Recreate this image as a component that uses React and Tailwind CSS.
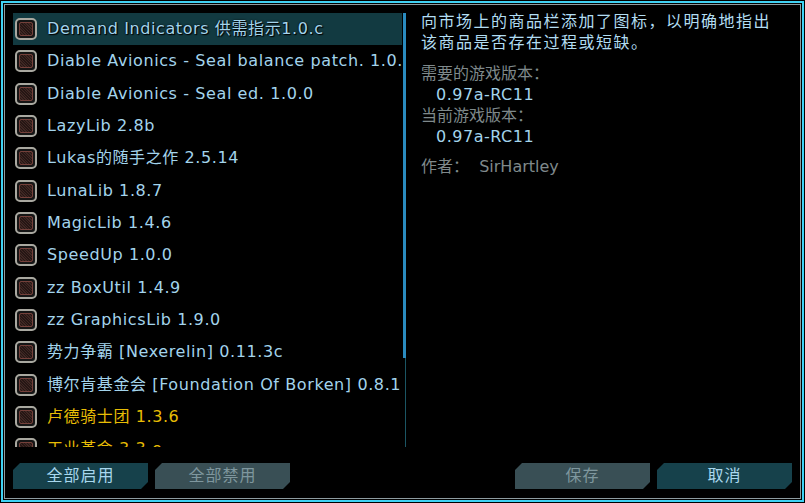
import React from 'react';

const MODS = [
  { name: 'Demand Indicators 供需指示1.0.c', selected: true },
  { name: 'Diable Avionics - Seal balance patch. 1.0.0' },
  { name: 'Diable Avionics - Seal ed. 1.0.0' },
  { name: 'LazyLib 2.8b' },
  { name: 'Lukas的随手之作 2.5.14' },
  { name: 'LunaLib 1.8.7' },
  { name: 'MagicLib 1.4.6' },
  { name: 'SpeedUp 1.0.0' },
  { name: 'zz BoxUtil 1.4.9' },
  { name: 'zz GraphicsLib 1.9.0' },
  { name: '势力争霸 [Nexerelin] 0.11.3c' },
  { name: '博尔肯基金会 [Foundation Of Borken] 0.8.1' },
  { name: '卢德骑士团 1.3.6', yellow: true },
  { name: '工业革命 3.3.e', yellow: true },
];

const FONT = "font-['DejaVu_Sans','Noto_Sans_CJK_SC',sans-serif]";
const NOTCH =
  '[clip-path:polygon(7px_0,100%_0,100%_calc(100%_-_7px),calc(100%_-_7px)_100%,0_100%,0_7px)]';

function Checkbox() {
  return (
    <div className="w-[22px] h-[22px] shrink-0 rounded-[5px] border-2 border-[#a9a8a0] bg-[#151515] p-[2px]">
      <div className="w-full h-full rounded-[2px] border border-[#74403a] bg-[repeating-linear-gradient(45deg,#3f2723_0_1px,#251614_1px_2px)]" />
    </div>
  );
}

function ModRow({ mod }) {
  return (
    <div
      className={`flex items-center gap-[10px] pl-[2px] h-[32.33px] shrink-0 ${
        mod.selected ? 'bg-[#123a41]' : ''
      }`}
    >
      <Checkbox />
      <span
        className={`whitespace-nowrap text-[16px] tracking-[0.6px] [text-shadow:0_0_2px_#000,1px_1px_1px_#000] ${
          mod.yellow ? 'text-[#e8bd05]' : 'text-[#a3d4ec]'
        }`}
      >
        {mod.name}
      </span>
    </div>
  );
}

function Button({ label, enabled }) {
  return (
    <button
      className={`w-[135px] h-[26px] flex items-center justify-center text-[16px] tracking-[1px] ${NOTCH} ${
        enabled ? 'bg-[#16414b] text-[#a9d8ee]' : 'bg-[#394f55] text-[#7f979e]'
      }`}
    >
      {label}
    </button>
  );
}

export default function App() {
  return (
    <div className={`w-[805px] h-[503px] bg-black p-px ${FONT}`}>
      <div className="w-full h-full border-2 border-[#3fd2f4] p-px">
        <div className="w-full h-full border border-[#8d9ba0] flex flex-col pt-[8px] px-[8px] pb-[9px]">
          <div className="flex h-[434px]">
            <div className="w-[389px] h-full overflow-hidden flex flex-col">
              {MODS.map(m => (
                <ModRow key={m.name} mod={m} />
              ))}
            </div>

            {/* scrollbar */}
            <div className="w-[4px] ml-px h-full relative">
              <div className="absolute left-[2px] top-0 bottom-0 w-px bg-[#1b5563]" />
              <div className="absolute left-0 top-0 w-[3px] h-[345px] bg-[#2a8bbf]" />
            </div>

            <div className="flex-1 pl-[14px] -mt-[2px] text-[16px]">
              <p className="text-[#b2ddf2] leading-[21px] tracking-[1.5px]">
                向市场上的商品栏添加了图标，以明确地指出
                <br />
                该商品是否存在过程或短缺。
              </p>
              <div className="mt-[10px] leading-[21px]">
                <p className="text-[#7f898b]">需要的游戏版本：</p>
                <p className="pl-[15px] text-[#a3d4ec] tracking-[0.5px]">0.97a-RC11</p>
                <p className="text-[#7f898b]">当前游戏版本：</p>
                <p className="pl-[15px] text-[#a3d4ec] tracking-[0.5px]">0.97a-RC11</p>
                <p className="mt-[9px] text-[#7f898b]">作者：&nbsp; SirHartley</p>
              </div>
            </div>
          </div>

          <div className="flex items-center mt-[16px]">
            <div className="flex gap-[7px]">
              <Button label="全部启用" enabled />
              <Button label="全部禁用" />
            </div>
            <div className="flex gap-[7px] ml-auto">
              <Button label="保存" />
              <Button label="取消" enabled />
            </div>
          </div>
        </div>
      </div>
    </div>
  );
}
